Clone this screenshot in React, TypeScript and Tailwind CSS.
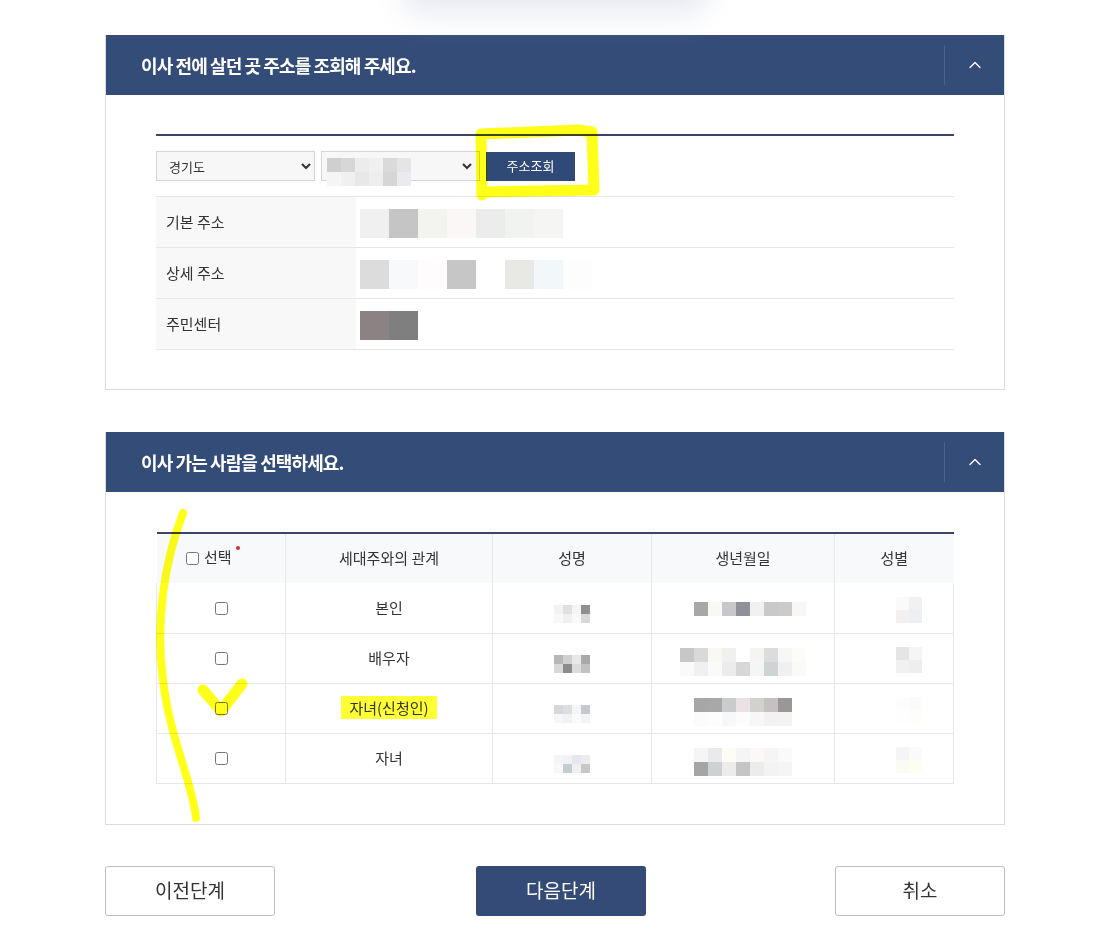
import { ChevronUp } from 'lucide-react';

const font = { fontFamily: '"Noto Sans CJK KR", "Noto Sans", sans-serif' };

// mosaic blocks that stand in for the blurred personal data
function Mosaic({ cells, size = 14 }: { cells: string[][]; size?: number }) {
    return (
        <div className="inline-flex flex-col">
            {cells.map((row, i) => (
                <div key={i} className="flex">
                    {row.map((c, j) => (
                        <div key={j} style={{ width: size, height: size, background: c }} />
                    ))}
                </div>
            ))}
        </div>
    );
}

function PanelHeader({ title }: { title: string }) {
    return (
        <div className="flex h-[60px] items-center bg-[#344c78]">
            <h2 className="flex-1 pl-[35px] text-[18px] font-bold tracking-[-0.05em] text-white">{title}</h2>
            <div className="h-[40px] w-px bg-[#4a6190]" />
            <div className="flex w-[59px] items-center justify-center text-white">
                <ChevronUp size={20} strokeWidth={1.6} />
            </div>
        </div>
    );
}

const members = [
    { rel: '본인', name: [['#f3f3f3', '#e0e0e0', '#f5f5f5', '#8f8f8f'], ['#f8f8f8', '#f0f0f0', '#f9f9f9', '#d8d8d8']], birth: [['#fff', '#a7a7a7', '#f9f9f4', '#c8c8cc', '#8f909a', '#f1f1f1', '#c9c9c9', '#cdcaca', '#f7f7f7']], sex: [['#fafafa', '#f1f1f4'], ['#f5f0f0', '#eeeff3']] },
    { rel: '배우자', name: [['#b8b8b8', '#d0d0d0', '#e8e8e8', '#a9a9a9'], ['#d8d8d8', '#8c8c8c', '#dcdcdc', '#c2c2c2']], birth: [['#c7c7c7', '#d9d9d9', '#faf9f1', '#f0f0f0', '#fff', '#f4f4f0', '#dcdcdc', '#f7f7f7', '#fdfdf8'], ['#fafafa', '#f0f0f0', '#fafafa', '#ececec', '#d7d7d7', '#f5f5f5', '#ced3d3', '#f0f0f0', '#fafafa']], sex: [['#e5e5e5', '#f5f5f5'], ['#f1f1f1', '#eeeeee']] },
    { rel: '자녀(신청인)', hl: true, name: [['#d6d6dc', '#dedede', '#f5f5f5', '#c5c8d0'], ['#f6f7fa', '#f1f2f4', '#fbfbfb', '#f4f4f4']], birth: [['#a6a6a6', '#a8a8a8', '#c9cbcd', '#ece2e6', '#d2d2cd', '#c5c0c2', '#9d9696'], ['#fbfbfb', '#fdfdfd', '#f8f8f8', '#fcfcfc', '#f7f7f7', '#f2f2f2', '#f3f3f3']], sex: [['#fdfdfd', '#fbfbfb'], ['#fefefe', '#fdfdfa']] },
    { rel: '자녀', name: [['#f5f5f8', '#f1f1f6', '#e6e6ef', '#ececec'], ['#f8f8f8', '#c5ccd0', '#f0f0f0', '#c8c8c8']], birth: [['#f5f5f5', '#eaeaea', '#fdfdf6', '#f5f5f5', '#fdf8f8', '#f5f5f5', '#fafafa'], ['#a5a5a5', '#ccd2d2', '#ececec', '#c5c5c5', '#ececec', '#f3f3f3', '#f5f5f5']], sex: [['#f5f5f5', '#fafafa'], ['#fbfbf5', '#fdfdf0']] },
];

export default function App() {
    return (
        <div className="relative min-h-[939px] bg-white text-[#333]" style={font}>
            <div className="pointer-events-none absolute left-[400px] top-[-30px] h-[44px] w-[310px] rounded-full bg-[#dfe2ea] opacity-70 blur-[14px]" />

            <div className="ml-[105px] w-[900px] pt-[35px]">
                {/* previous address */}
                <section className="border border-[#dcdcdc] border-t-0">
                    <PanelHeader title="이사 전에 살던 곳 주소를 조회해 주세요." />
                    <div className="px-[50px] pb-[39px] pt-[39px]">
                        <div className="border-t-2 border-[#3b4662]" />
                        <div className="flex items-center gap-[6px] pt-[15px] pb-[15px]">
                            <select className="h-[30px] w-[159px] border border-[#d5d5d5] bg-[#f7f7f7] px-[8px] text-[13px] text-[#333]">
                                <option>경기도</option>
                            </select>
                            <div className="relative h-[30px] w-[159px] border border-[#d5d5d5] bg-[#f7f7f7]">
                                <div className="absolute left-[5px] top-[1px]">
                                    <Mosaic size={14} cells={[['#cfcfcf', '#d7d7d7', '#ececec', '#f0f0f0', '#dadada', '#e5e5e5'], ['#f5f5f5', '#f0f0f0', '#e8e8e8', '#eeeeee', '#d6d6d6', '#eaeaef']]} />
                                </div>
                                <svg className="absolute right-[7px] top-[11px]" width="10" height="7" viewBox="0 0 10 7">
                                    <path d="M1 1l4 4 4-4" fill="none" stroke="#333" strokeWidth="2" />
                                </svg>
                            </div>
                            <button className="h-[29px] w-[89px] bg-[#2f4a76] text-[13px] text-white">주소조회</button>
                        </div>
                        <div className="border-t border-[#e6e6e6]">
                            {[
                                { label: '기본 주소', cells: [['#f0f0f0', '#c5c5c5', '#f3f3f0', '#fbf7f7', '#ececec', '#f1f3f1', '#f5f5f3', '#fff']] },
                                { label: '상세 주소', cells: [['#dcdcdc', '#f7f9fb', '#fefcfc', '#c6c6c6', '#fff', '#e8e8e5', '#f2f7f9', '#fdfdfd']] },
                                { label: '주민센터', cells: [['#8b8383', '#7f7f7f']] },
                            ].map((r) => (
                                <div key={r.label} className="flex h-[51px] border-b border-[#e6e6e6]">
                                    <div className="flex w-[200px] items-center bg-[#f8f8f8] pl-[10px] text-[15px] text-[#333]">{r.label}</div>
                                    <div className="flex items-center pl-[4px] pt-[2px]">
                                        <Mosaic size={29} cells={r.cells} />
                                    </div>
                                </div>
                            ))}
                        </div>
                    </div>
                </section>

                {/* movers */}
                <section className="mt-[42px] border border-[#dcdcdc] border-t-0">
                    <PanelHeader title="이사 가는 사람을 선택하세요." />
                    <div className="px-[50px] pb-[40px] pt-[40px]">
                        <table className="w-full border-collapse text-center text-[15px]">
                            <thead>
                                <tr className="border-t-2 border-[#3b4662] bg-[#f8f9fa]">
                                    <th className="h-[50px] w-[129px] border-r border-[#e8e8e8] pr-[24px] font-normal">
                                        <span className="relative inline-flex items-center gap-[5px]">
                                            <input type="checkbox" className="mt-[2px] h-[13px] w-[13px]" />
                                            선택
                                            <span className="absolute -right-[8px] top-[0px] h-[4px] w-[4px] rounded-full bg-[#d32f2f]" />
                                        </span>
                                    </th>
                                    <th className="w-[207px] border-r border-[#e8e8e8] font-normal">세대주와의 관계</th>
                                    <th className="w-[159px] border-r border-[#e8e8e8] font-normal">성명</th>
                                    <th className="w-[183px] border-r border-[#e8e8e8] font-normal">생년월일</th>
                                    <th className="font-normal">성별</th>
                                </tr>
                            </thead>
                            <tbody>
                                {members.map((m) => (
                                    <tr key={m.rel} className="h-[50px] border-b border-[#e8e8e8]">
                                        <td className="border-x border-[#e8e8e8]">
                                            <input type="checkbox" className="mt-[6px] h-[13px] w-[13px]" />
                                        </td>
                                        <td className="border-r border-[#e8e8e8]">
                                            <span className={m.hl ? 'bg-[#ffff33] px-[8px] py-[1px]' : ''}>{m.rel}</span>
                                        </td>
                                        <td className="border-r border-[#e8e8e8]">
                                            <div className="inline-block pt-[4px]"><Mosaic size={9} cells={m.name} /></div>
                                        </td>
                                        <td className="border-r border-[#e8e8e8]">
                                            <div className="inline-block pt-[4px]"><Mosaic size={14} cells={m.birth} /></div>
                                        </td>
                                        <td className="border-r border-[#e8e8e8]">
                                            <div className="inline-block pl-[30px]"><Mosaic size={13} cells={m.sex} /></div>
                                        </td>
                                    </tr>
                                ))}
                            </tbody>
                        </table>
                    </div>
                </section>

                {/* step buttons */}
                <div className="mt-[41px] flex items-center justify-between pb-[24px]">
                    <button className="h-[50px] w-[170px] rounded-[3px] border border-[#bdbdbd] bg-white text-[19px] text-[#333]">이전단계</button>
                    <button className="ml-[12px] h-[50px] w-[170px] rounded-[3px] bg-[#334b76] text-[19px] text-white">다음단계</button>
                    <button className="h-[50px] w-[170px] rounded-[3px] border border-[#bdbdbd] bg-white text-[19px] text-[#333]">취소</button>
                </div>
            </div>

            {/* yellow highlighter marks drawn over the screenshot */}
            <svg className="pointer-events-none absolute left-0 top-0 mix-blend-multiply" width="1101" height="939" viewBox="0 0 1101 939">
                <g fill="none" stroke="#ffff1a" strokeLinecap="round" strokeLinejoin="round">
                    <path d="M482 195 L481 134 L578 130 L592 132 L594 190 L486 192" strokeWidth="11" />
                    <path d="M183 513 C 165 560, 155 620, 163 680 C 170 740, 192 780, 196 818" strokeWidth="8" />
                    <path d="M203 690 L221 711 L242 684" strokeWidth="11" />
                </g>
            </svg>
        </div>
    );
}
